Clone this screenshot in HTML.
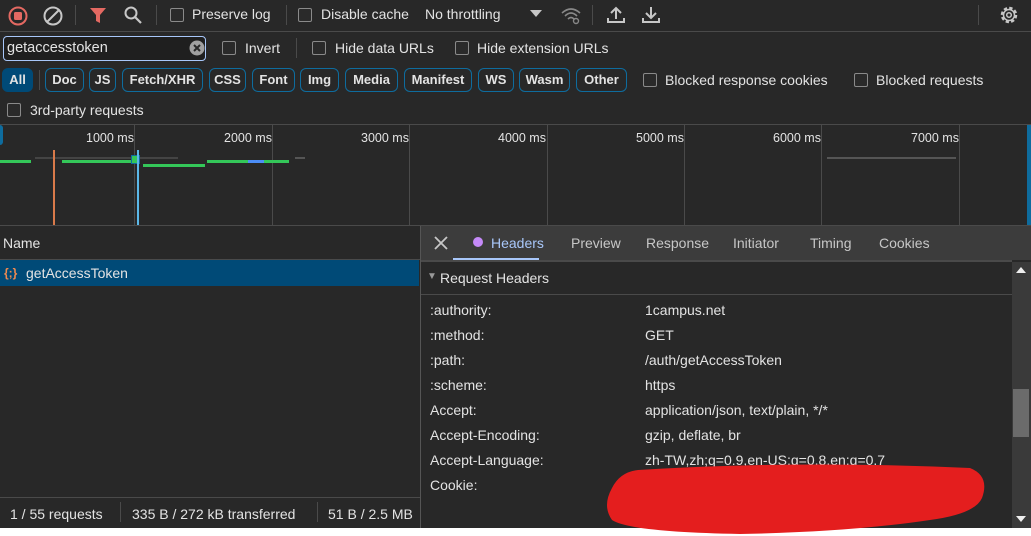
<!DOCTYPE html>
<html><head><meta charset="utf-8"><style>
*{box-sizing:border-box;margin:0;padding:0}
body{width:1031px;height:536px;background:#fff;font-family:"Liberation Sans",sans-serif;font-size:14px;color:#e3e3e3;position:relative;overflow:hidden}
.a{position:absolute;white-space:nowrap}
.cb{position:absolute;width:14px;height:14px;border:1.5px solid #8a8a8a;border-radius:2px;background:#2a2a2a}
.chip{position:absolute;top:68px;height:24px;border:1px solid #0e6c9e;border-radius:6px;font-weight:bold;font-size:13px;line-height:22px;text-align:center;color:#e3e3e3}
.vl{position:absolute;width:1px;background:#4a4a4a}
.hl{position:absolute;height:1px;background:#4a4a4a;left:0}
.row{position:absolute;left:430px;font-size:14px;color:#e3e3e3}
</style></head><body>
<div class="a" style="left:0;top:0;width:1031px;height:528px;background:#282828"></div>
<svg class="a" style="left:7px;top:5px" width="22" height="22"><circle cx="11" cy="11" r="8.5" fill="none" stroke="#e46962" stroke-width="2"/><rect x="7" y="7" width="8" height="8" rx="1.5" fill="#e46962"/></svg>
<svg class="a" style="left:42px;top:5px" width="22" height="22"><circle cx="11" cy="11" r="8.5" fill="none" stroke="#c7c7c7" stroke-width="2"/><line x1="5" y1="17" x2="17" y2="5" stroke="#c7c7c7" stroke-width="2"/></svg>
<div class="vl" style="left:75px;top:5px;height:20px"></div>
<svg class="a" style="left:89px;top:6px" width="18" height="18"><path d="M1 2H17L11 9V17L7 15V9Z" fill="#e46962"/></svg>
<svg class="a" style="left:123px;top:5px" width="20" height="20"><circle cx="8" cy="8" r="5.5" fill="none" stroke="#c7c7c7" stroke-width="2"/><line x1="12" y1="12" x2="18" y2="18" stroke="#c7c7c7" stroke-width="2.2"/></svg>
<div class="vl" style="left:156px;top:5px;height:20px"></div>
<div class="cb" style="left:170px;top:8px"></div><div class="a" style="left:192px;top:6px">Preserve log</div>
<div class="vl" style="left:286px;top:5px;height:20px"></div>
<div class="cb" style="left:298px;top:8px"></div><div class="a" style="left:321px;top:6px">Disable cache</div>
<div class="a" style="left:425px;top:6px">No throttling</div>
<svg class="a" style="left:530px;top:10px" width="12" height="8"><path d="M0 0H12L6 7Z" fill="#c7c7c7"/></svg>
<svg class="a" style="left:560px;top:5px" width="22" height="20"><path d="M2 8Q11 0 20 8M5 11Q11 5 17 11M8 14Q11 11 14 14" fill="none" stroke="#888" stroke-width="1.6"/><circle cx="16" cy="16" r="2.5" fill="none" stroke="#888" stroke-width="1.4"/></svg>
<div class="vl" style="left:592px;top:5px;height:20px"></div>
<svg class="a" style="left:606px;top:5px" width="20" height="20"><path d="M10 14V3M5 8L10 3L15 8M2 13V17H18V13" fill="none" stroke="#c7c7c7" stroke-width="2"/></svg>
<svg class="a" style="left:641px;top:5px" width="20" height="20"><path d="M10 2V13M5 8L10 13L15 8M2 13V17H18V13" fill="none" stroke="#c7c7c7" stroke-width="2"/></svg>
<div class="vl" style="left:978px;top:5px;height:20px"></div>
<svg class="a" style="left:998px;top:4px" width="22" height="22"><circle cx="11" cy="11" r="7" fill="none" stroke="#c7c7c7" stroke-width="2.5" stroke-dasharray="3.3 2.2"/><circle cx="11" cy="11" r="5.5" fill="none" stroke="#c7c7c7" stroke-width="1.5"/><circle cx="11" cy="11" r="2.3" fill="none" stroke="#c7c7c7" stroke-width="1.5"/></svg>
<div class="hl" style="top:31px;width:1031px"></div>
<div class="a" style="left:3px;top:36px;width:203px;height:25px;border:1px solid #a8c7fa;border-radius:4px;background:#1f1f1f"></div>
<div class="a" style="left:7px;top:40px;font-size:14.5px">getaccesstoken</div>
<svg class="a" style="left:189px;top:40px" width="16" height="16"><circle cx="8" cy="8" r="7.5" fill="#a0a0a0"/><path d="M5 5L11 11M11 5L5 11" stroke="#282828" stroke-width="2"/></svg>
<div class="cb" style="left:222px;top:41px"></div><div class="a" style="left:245px;top:40px">Invert</div>
<div class="vl" style="left:296px;top:38px;height:20px"></div>
<div class="cb" style="left:312px;top:41px"></div><div class="a" style="left:335px;top:40px">Hide data URLs</div>
<div class="cb" style="left:455px;top:41px"></div><div class="a" style="left:477px;top:40px">Hide extension URLs</div>
<div class="chip" style="left:2px;width:31px;background:#004a77;border-color:#004a77">All</div>
<div class="vl" style="left:39px;top:70px;height:20px"></div>
<div class="chip" style="left:45px;width:39px">Doc</div>
<div class="chip" style="left:89px;width:27px">JS</div>
<div class="chip" style="left:122px;width:81px">Fetch/XHR</div>
<div class="chip" style="left:209px;width:37px">CSS</div>
<div class="chip" style="left:252px;width:43px">Font</div>
<div class="chip" style="left:300px;width:39px">Img</div>
<div class="chip" style="left:345px;width:53px">Media</div>
<div class="chip" style="left:404px;width:68px">Manifest</div>
<div class="chip" style="left:478px;width:36px">WS</div>
<div class="chip" style="left:519px;width:51px">Wasm</div>
<div class="chip" style="left:576px;width:51px">Other</div>
<div class="cb" style="left:643px;top:73px"></div><div class="a" style="left:665px;top:72px">Blocked response cookies</div>
<div class="cb" style="left:854px;top:73px"></div><div class="a" style="left:876px;top:72px">Blocked requests</div>
<div class="cb" style="left:7px;top:103px"></div><div class="a" style="left:30px;top:102px">3rd-party requests</div>
<div class="hl" style="top:124px;width:1031px"></div>
<div class="vl" style="left:134px;top:125px;height:100px"></div>
<div class="vl" style="left:272px;top:125px;height:100px"></div>
<div class="vl" style="left:409px;top:125px;height:100px"></div>
<div class="vl" style="left:547px;top:125px;height:100px"></div>
<div class="vl" style="left:684px;top:125px;height:100px"></div>
<div class="vl" style="left:821px;top:125px;height:100px"></div>
<div class="vl" style="left:959px;top:125px;height:100px"></div>
<div class="a" style="left:86px;top:131px;font-size:12.5px">1000 ms</div>
<div class="a" style="left:224px;top:131px;font-size:12.5px">2000 ms</div>
<div class="a" style="left:361px;top:131px;font-size:12.5px">3000 ms</div>
<div class="a" style="left:498px;top:131px;font-size:12.5px">4000 ms</div>
<div class="a" style="left:636px;top:131px;font-size:12.5px">5000 ms</div>
<div class="a" style="left:773px;top:131px;font-size:12.5px">6000 ms</div>
<div class="a" style="left:911px;top:131px;font-size:12.5px">7000 ms</div>
<div class="a" style="left:0;top:125px;width:3px;height:20px;background:#0e6c9e;border-radius:0 3px 3px 0"></div>
<div class="a" style="left:1027px;top:125px;width:4px;height:100px;background:#0e6c9e"></div>
<div class="a" style="left:35px;top:157px;width:143px;height:2px;background:#444"></div>
<div class="a" style="left:0;top:160px;width:31px;height:3px;background:#34c759"></div>
<div class="a" style="left:62px;top:160px;width:70px;height:3px;background:#34c759"></div>
<div class="a" style="left:131px;top:155px;width:9px;height:9px;background:#34c759;border:1px solid #0e6c9e"></div>
<div class="a" style="left:143px;top:164px;width:62px;height:3px;background:#34c759"></div>
<div class="a" style="left:207px;top:160px;width:41px;height:3px;background:#34c759"></div>
<div class="a" style="left:248px;top:160px;width:16px;height:3px;background:#4c8df6"></div>
<div class="a" style="left:264px;top:160px;width:25px;height:3px;background:#34c759"></div>
<div class="a" style="left:295px;top:157px;width:10px;height:2px;background:#555"></div>
<div class="a" style="left:53px;top:150px;width:2px;height:75px;background:#d97a4a"></div>
<div class="a" style="left:137px;top:150px;width:2px;height:75px;background:#5bb8e8"></div>
<div class="a" style="left:827px;top:157px;width:129px;height:2px;background:#555"></div>
<div class="hl" style="top:225px;width:1031px"></div>
<div class="a" style="left:3px;top:235px">Name</div>
<div class="hl" style="top:259px;width:420px"></div>
<div class="a" style="left:0;top:260px;width:419px;height:26px;background:#004a77"></div>
<div class="a" style="left:4px;top:266px;font-size:12px;color:#f08a50;font-weight:bold">{;}</div>
<div class="a" style="left:26px;top:265px">getAccessToken</div>
<div class="hl" style="top:497px;width:420px"></div>
<div class="a" style="left:10px;top:506px">1 / 55 requests</div>
<div class="vl" style="left:120px;top:502px;height:20px"></div>
<div class="a" style="left:132px;top:506px">335 B / 272 kB transferred</div>
<div class="vl" style="left:317px;top:502px;height:20px"></div>
<div class="a" style="left:328px;top:506px">51 B / 2.5 MB</div>
<div class="vl" style="left:420px;top:226px;height:302px;background:#555"></div>
<div class="a" style="left:421px;top:226px;width:610px;height:34px;background:#3c3c3c"></div>
<svg class="a" style="left:433px;top:235px" width="16" height="16"><path d="M2 2L14 14M14 2L2 14" stroke="#c7c7c7" stroke-width="1.8"/></svg>
<div class="a" style="left:473px;top:237px;width:10px;height:10px;border-radius:50%;background:#c58af9"></div>
<div class="a" style="left:491px;top:235px;color:#a8c7fa">Headers</div>
<div class="a" style="left:453px;top:258px;width:86px;height:2px;background:#a8c7fa"></div>
<div class="a" style="left:571px;top:235px;color:#c7c7c7">Preview</div>
<div class="a" style="left:646px;top:235px;color:#c7c7c7">Response</div>
<div class="a" style="left:733px;top:235px;color:#c7c7c7">Initiator</div>
<div class="a" style="left:810px;top:235px;color:#c7c7c7">Timing</div>
<div class="a" style="left:879px;top:235px;color:#c7c7c7">Cookies</div>
<div class="a" style="left:421px;top:260px;width:591px;height:2px;background:#4a4a4a"></div>
<div class="a" style="left:427px;top:271px;font-size:10px;color:#999">▼</div>
<div class="a" style="left:440px;top:270px">Request Headers</div>
<div class="a" style="left:421px;top:294px;width:591px;height:1px;background:#4a4a4a"></div>
<div class="a" style="left:1012px;top:262px;width:19px;height:266px;background:#3a3a3a"></div>
<div class="a" style="left:1013px;top:389px;width:16px;height:48px;background:#6b6b6b"></div>
<svg class="a" style="left:1016px;top:266px" width="10" height="8"><path d="M0 7L5 1L10 7Z" fill="#eee"/></svg>
<svg class="a" style="left:1016px;top:515px" width="10" height="8"><path d="M0 1L5 7L10 1Z" fill="#eee"/></svg>
<div class="row" style="top:302px">:authority:</div><div class="a" style="left:645px;top:302px">1campus.net</div>
<div class="row" style="top:327px">:method:</div><div class="a" style="left:645px;top:327px">GET</div>
<div class="row" style="top:352px">:path:</div><div class="a" style="left:645px;top:352px">/auth/getAccessToken</div>
<div class="row" style="top:377px">:scheme:</div><div class="a" style="left:645px;top:377px">https</div>
<div class="row" style="top:402px">Accept:</div><div class="a" style="left:645px;top:402px">application/json, text/plain, */*</div>
<div class="row" style="top:427px">Accept-Encoding:</div><div class="a" style="left:645px;top:427px">gzip, deflate, br</div>
<div class="row" style="top:452px">Accept-Language:</div><div class="a" style="left:645px;top:452px">zh-TW,zh;q=0.9,en-US;q=0.8,en;q=0.7</div>
<div class="row" style="top:477px">Cookie:</div>
<svg class="a" style="left:600px;top:462px" width="390" height="74"><path d="M38 8Q200 -2 370 6Q390 14 382 36Q375 52 330 58Q250 70 140 72Q30 70 12 58Q2 44 12 26Q20 10 38 8Z" fill="#e41e1e"/></svg>
</body></html>
